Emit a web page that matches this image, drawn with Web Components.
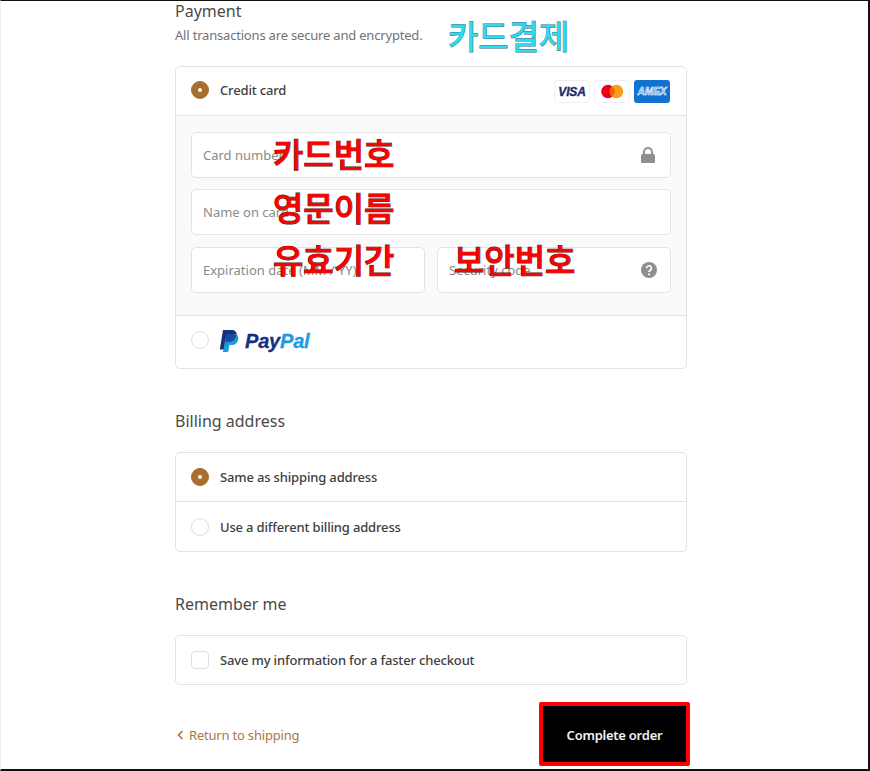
<!DOCTYPE html>
<html lang="en">
<head>
<meta charset="utf-8">
<title>Payment</title>
<style>
    html, body { margin: 0; padding: 0; background: #fff; }
</style>
</head>
<body>

<template id="checkout_page">
    <style>
        :host {
            display: block;
            box-sizing: border-box;
            width: 870px;
            height: 771px;
            overflow: hidden;
            border-top: 1px solid #111;
            border-bottom: 2px solid #111;
            border-right: 2px solid #111;
            border-left: 1px solid #eee;
            padding-left: 174px;
            font-family: "Noto Sans", "Open Sans", sans-serif;
            color: #333;
        }
        .col { width: 512px; display: flex; flex-direction: column; }
    </style>
    <div class="col"><slot></slot></div>
</template>

<template id="check_section">
    <style>
        :host { display: block; position: relative; }
        h2 { margin: 0; font-size: 16px; line-height: 22px; font-weight: 400; color: #4a4a4a; }
        p { margin: 3px 0 0; font-size: 13px; letter-spacing: -.19px; line-height: 20px; color: #737373; }
        p:empty { display: none; }
        .box { margin-top: var(--box-gap, 20px); }
    </style>
    <h2></h2>
    <p></p>
    <div class="box"><slot></slot></div>
</template>

<template id="check_card">
    <style>
        :host {
            display: block;
            box-sizing: border-box;
            border: 1px solid #e3e3e3;
            border-radius: 5px;
            overflow: hidden;
            background: #fff;
        }
    </style>
    <slot></slot>
</template>

<template id="check_row">
    <style>
        :host {
            display: flex;
            align-items: center;
            box-sizing: border-box;
            height: var(--row-h, 49px);
            padding: 0 16px var(--row-pb, 0) 15px;
            font-size: 13px;
            letter-spacing: -.16px;
            font-weight: 500;
            color: #404040;
        }
        :host([divided]) { border-bottom: 1px solid #e3e3e3; }
        .mark {
            box-sizing: border-box;
            flex: none;
            width: 18px;
            height: 18px;
            margin: var(--mark-mt, 0) 11px 0 0;
            border: 1px solid #dedede;
            border-radius: 50%;
            background: #fff;
            display: flex;
            align-items: center;
            justify-content: center;
        }
        :host([type="checkbox"]) .mark { border-radius: 4px; }
        :host([checked]) .mark { background: #a76f2b; border-color: #a76f2b; }
        :host([checked]) .mark::after {
            content: "";
            width: 4px;
            height: 4px;
            border-radius: 50%;
            background: #fff;
        }
        .text { flex: 1; display: flex; align-items: center; }
    </style>
    <span class="mark"></span>
    <span class="text"><slot></slot></span>
    <slot name="end"></slot>
</template>

<template id="check_field">
    <style>
        :host {
            display: flex;
            align-items: center;
            justify-content: space-between;
            box-sizing: border-box;
            height: 46px;
            padding: 0 13px 0 11px;
            border: 1px solid #e3e3e3;
            border-radius: 5px;
            background: #fff;
            font-size: 13px;
            color: #8a8a8a;
        }
    </style>
    <slot></slot>
    <slot name="icon"></slot>
</template>

<template id="card_logos">
    <style>
        :host { display: flex; gap: 4px; margin-top: 2px; }
        svg { display: block; }
        text { font-family: "Liberation Sans", sans-serif; font-weight: 700; font-style: italic; }
    </style>
    <svg width="36" height="23" viewBox="0 0 36 23">
        <rect x=".5" y=".5" width="35" height="22" rx="3" fill="#fff" stroke="#efefef"/>
        <text x="18" y="15.5" font-size="12" text-anchor="middle" fill="#1a2a6c" stroke="#1a2a6c" stroke-width=".35">VISA</text>
    </svg>
    <svg width="36" height="23" viewBox="0 0 36 23">
        <rect x=".5" y=".5" width="35" height="22" rx="3" fill="#fff" stroke="#efefef"/>
        <circle cx="14" cy="11.5" r="6.8" fill="#e8001c"/>
        <circle cx="22.4" cy="11.5" r="6.8" fill="#f79e1b"/>
        <path d="M18.2 6.2a6.8 6.8 0 0 1 0 10.6a6.8 6.8 0 0 1 0-10.6z" fill="#ff5f00"/>
    </svg>
    <svg width="36" height="23" viewBox="0 0 36 23">
        <rect width="36" height="23" rx="3" fill="#1272d2"/>
        <text x="18" y="15.3" font-size="10.5" text-anchor="middle" textLength="29" lengthAdjust="spacingAndGlyphs" fill="#5ea3e6" stroke="#fff" stroke-width=".55">AMEX</text>
    </svg>
</template>

<template id="paypal_logo">
    <style>
        :host { display: flex; align-items: center; gap: 6px; margin: 1px 0 0 -1px; }
        svg { display: block; }
        span {
            font-family: "Liberation Sans", sans-serif;
            font-size: 20px;
            font-weight: 700;
            font-style: italic;
            letter-spacing: -.2px;
            color: #16307e;
            -webkit-text-stroke: .3px currentColor;
            margin-top: 2px;
        }
        b { color: #1d9be0; font-weight: 700; }
    </style>
    <svg width="20" height="22" viewBox="0 0 20 22">
        <path d="M4 0h8c4 0 6.300 2 5.600 5.800C17 9.800 14 12 10.300 12H7.500L6.200 19.500H0.800z" fill="#16307e"/>
        <path d="M7.500 4h7c3.400 0 5.300 1.800 4.700 5.200C18.600 12.800 16 15 12.600 15H10.300L9.200 22H3.800z" fill="#1d9be0"/>
        <path d="M6.600 4h7.200c1.300 0 2.500.3 3.500 1C16.800 9.400 14 12 10.300 12H7.500L7 15z" fill="#1a4aa0"/>
    </svg>
    <span>Pay<b>Pal</b></span>
</template>

<template id="check_note">
    <style>
        :host {
            position: absolute;
            font-family: "Noto Sans CJK KR", "Noto Sans", sans-serif;
            font-weight: 500;
            font-size: 33px;
            line-height: 36px;
            white-space: nowrap;
            color: #ff0000;
            -webkit-text-stroke: 1px #5a1010;
            paint-order: stroke fill;
            pointer-events: none;
        }
        :host([tone="cyan"]) { font-weight: 400; color: #2bdcf5; -webkit-text-stroke: 1px #1f6f80; }
    </style>
    <slot></slot>
</template>

<template id="check_actions">
    <style>
        :host {
            display: flex;
            align-items: center;
            justify-content: space-between;
            font-size: 13px;
        }
        a { display: flex; align-items: center; gap: 5px; padding: 2px 0 0 2px; letter-spacing: -.2px; color: #a9793f; text-decoration: none; }
        button {
            box-sizing: border-box;
            width: 151px;
            height: 64px;
            margin-right: -3px;
            padding-top: 3px;
            border: 4px solid #ff0000;
            border-radius: 2px;
            background: #000;
            color: #f2f2f2;
            font: 600 13px "Noto Sans", "Open Sans", sans-serif;
            letter-spacing: -.25px;
        }
    </style>
    <a href="#">
        <svg width="7" height="10" viewBox="0 0 7 10"><path d="M5.500 1L1.500 5l4 4" fill="none" stroke="#a76f2b" stroke-width="1.500"/></svg>
        Return to shipping
    </a>
    <button type="button"><slot></slot></button>
</template>

<script>
    (function defineCheckout(customElements) {
        'use strict'

        // every element is the same: clone its template into an open shadow root
        function simple(tag, templateId, extra) {
            class Element extends HTMLElement {
                constructor() {
                    super();
                    const root = this.attachShadow({ mode: 'open' });
                    root.appendChild(document.getElementById(templateId).content.cloneNode(true));
                }
                connectedCallback() {
                    if (extra) extra(this);
                }
            }
            customElements.define(tag, Element);
        }

        simple('checkout-page', 'checkout_page');
        simple('check-section', 'check_section', (el) => {
            el.shadowRoot.querySelector('h2').textContent = el.getAttribute('title');
            el.shadowRoot.querySelector('p').textContent = el.getAttribute('note') || '';
        });
        simple('check-card', 'check_card');
        simple('check-row', 'check_row');
        simple('check-field', 'check_field');
        simple('card-logos', 'card_logos');
        simple('paypal-logo', 'paypal_logo');
        simple('check-note', 'check_note');
        simple('check-actions', 'check_actions');

    })(window.customElements);
</script>

<checkout-page>
    <check-section title="Payment" note="All transactions are secure and encrypted." style="margin-top:-1px;--box-gap:21px">
        <check-note tone="cyan" style="left:273px;top:17px">카드결제</check-note>
        <check-card>
            <check-row type="radio" checked divided style="--row-pb:2px">Credit card<card-logos slot="end"></card-logos></check-row>
            <div style="background:#fafafa;padding:16px 15px 22px;display:flex;flex-direction:column;gap:11px;border-bottom:1px solid #e3e3e3;position:relative">
                <check-field>Card number
                    <svg slot="icon" width="14" height="16" viewBox="0 0 14 16" style="margin-right:2px"><path d="M3 7V5a4 4 0 0 1 8 0v2" fill="none" stroke="#8f8f8f" stroke-width="2"/><rect y="7" width="14" height="9" rx="1.500" fill="#8f8f8f"/></svg>
                </check-field>
                <check-field>Name on card</check-field>
                <div style="display:grid;grid-template-columns:1fr 1fr;gap:12px;margin-top:1px">
                    <check-field>Expiration date (MM / YY)</check-field>
                    <check-field>Security code
                        <svg slot="icon" width="16" height="16" viewBox="0 0 16 16"><circle cx="8" cy="8" r="8" fill="#8f8f8f"/><path d="M5.600 6.200a2.400 2.400 0 1 1 3.700 2c-.9.500-1.300 1-1.300 1.800" fill="none" stroke="#fff" stroke-width="1.700"/><circle cx="8" cy="12.300" r="1.100" fill="#fff"/></svg>
                    </check-field>
                </div>
                <check-note style="left:97px;top:19px">카드번호</check-note>
                <check-note style="left:97px;top:73px">영문이름</check-note>
                <check-note style="left:97px;top:125px">유효기간</check-note>
                <check-note style="left:278px;top:125px">보안번호</check-note>
            </div>
            <check-row type="radio" style="--row-h:52px;--row-pb:4px"><paypal-logo></paypal-logo></check-row>
        </check-card>
    </check-section>

    <check-section title="Billing address" style="margin-top:41px;--box-gap:20px">
        <check-card>
            <check-row type="radio" checked divided>Same as shipping address</check-row>
            <check-row type="radio">Use a different billing address</check-row>
        </check-card>
    </check-section>

    <check-section title="Remember me" style="margin-top:41px;--box-gap:20px">
        <check-card>
            <check-row type="checkbox" style="--row-h:48px">Save my information for a faster checkout</check-row>
        </check-card>
    </check-section>

    <check-actions style="margin-top:17px">Complete order</check-actions>
</checkout-page>

</body>
</html>
